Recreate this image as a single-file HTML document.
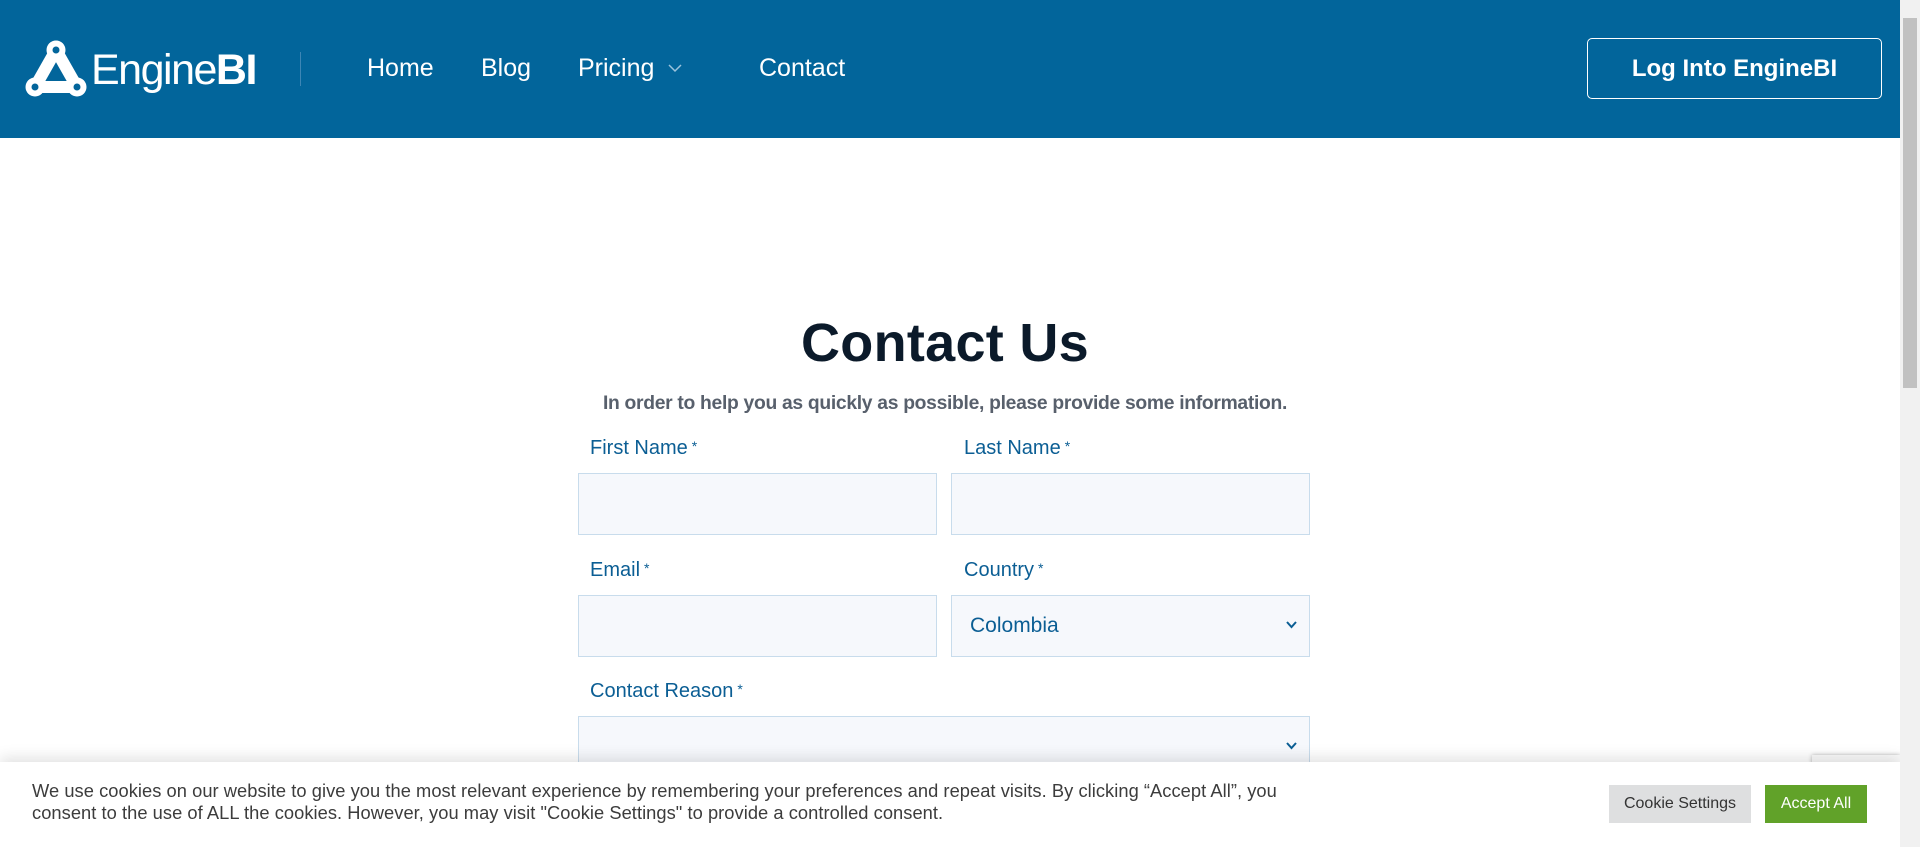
<!DOCTYPE html>
<html><head><meta charset="utf-8"><style>
*{box-sizing:border-box;margin:0;padding:0}
body{width:1920px;height:847px;overflow:hidden;background:#fff;font-family:"Liberation Sans",sans-serif;position:relative}
.hdr{position:absolute;left:0;top:0;width:1900px;height:138px;background:#02659b}
.nav a{position:absolute;top:52px;color:#fff;font-size:25px;text-decoration:none;line-height:32px}
.btn{position:absolute;left:1587px;top:38px;width:295px;height:61px;border:1.5px solid #fff;border-radius:5px;color:#fff;font-weight:bold;font-size:24px;display:flex;align-items:center;justify-content:center}
.sb{position:absolute;right:0;top:0;width:20px;height:847px;background:#f1f1f1}
.th{position:absolute;right:3px;top:18px;width:14px;height:370px;background:#c1c1c1}
h1{position:absolute;left:0;width:1890px;top:312px;text-align:center;font-size:54px;font-weight:bold;color:#0b1a2a;letter-spacing:0.3px}
.sub{position:absolute;left:0;width:1890px;top:393px;text-align:center;font-size:19.3px;font-weight:bold;color:#58606c;letter-spacing:-0.3px}
.lb{position:absolute;font-size:20px;color:#0b5e94}
.lb span{font-size:14px;vertical-align:3px;margin-left:4px}
.in{position:absolute;background:#f6f8fc;border:1.5px solid #c8dcec}
.chev{position:absolute;right:12px;top:50%;margin-top:-5px}
.ck{position:absolute;left:0;top:762px;width:1900px;height:85px;background:#fff;box-shadow:0 -4px 14px rgba(0,0,0,.12)}
.ckt{position:absolute;left:32px;top:18px;font-size:18.3px;line-height:22px;color:#3c3c3c;width:1245px;letter-spacing:0.05px}
.b1{position:absolute;left:1609px;top:23px;width:142px;height:38px;background:#dedfe0;color:#333;font-size:16px;display:flex;align-items:center;justify-content:center}
.b2{position:absolute;left:1765px;top:23px;width:102px;height:38px;background:#61a229;color:#fff;font-size:16px;display:flex;align-items:center;justify-content:center}
</style></head><body>
<div class="hdr">
<svg style="position:absolute;left:25px;top:40px" width="62" height="58" viewBox="0 0 62 58"><g stroke="#fff" stroke-width="12" stroke-linecap="round"><line x1="31" y1="10" x2="10" y2="47"/><line x1="31" y1="10" x2="52" y2="47"/><line x1="10" y1="47" x2="52" y2="47"/></g><g fill="#fff"><circle cx="31" cy="10" r="9.5"/><circle cx="10" cy="47" r="9.5"/><circle cx="52" cy="47" r="9.5"/></g><g fill="#02659b"><circle cx="31" cy="10" r="3.5"/><circle cx="10" cy="47" r="3.5"/><circle cx="52" cy="47" r="3.5"/><path d="M31 28 L39 40 L23 40 Z"/></g></svg>
<div style="position:absolute;left:91px;top:46px;color:#fff;font-size:43px;line-height:48px;letter-spacing:-1.5px"><span style="font-weight:normal">Engine</span><b>BI</b></div>
<div style="position:absolute;left:300px;top:52px;width:1px;height:34px;background:#3d86b5"></div>
<div class="nav"><a style="left:367px">Home</a><a style="left:481px">Blog</a><a style="left:578px">Pricing</a><a style="left:759px">Contact</a></div>
<svg style="position:absolute;left:668px;top:64px" width="14" height="9" viewBox="0 0 14 9"><path d="M1 1 L7 7 L13 1" stroke="#9cc3dc" stroke-width="1.5" fill="none"/></svg>
<div class="btn">Log Into EngineBI</div>
</div>
<h1>Contact Us</h1>
<div class="sub">In order to help you as quickly as possible, please provide some information.</div>
<div class="lb" style="left:590px;top:437px">First Name<span>*</span></div>
<div class="lb" style="left:964px;top:437px">Last Name<span>*</span></div>
<div class="in" style="left:578px;top:473px;width:359px;height:62px"></div>
<div class="in" style="left:951px;top:473px;width:359px;height:62px"></div>
<div class="lb" style="left:590px;top:559px">Email<span>*</span></div>
<div class="lb" style="left:964px;top:559px">Country<span>*</span></div>
<div class="in" style="left:578px;top:595px;width:359px;height:62px"></div>
<div class="in" style="left:951px;top:595px;width:359px;height:62px"><div style="position:absolute;left:18px;top:18px;font-size:21px;color:#0b5e94">Colombia</div><svg class="chev" width="11" height="8" viewBox="0 0 11 8"><path d="M1 1 L5.5 6 L10 1" stroke="#0b5e94" stroke-width="2" fill="none"/></svg></div>
<div class="lb" style="left:590px;top:680px">Contact Reason<span>*</span></div>
<div class="in" style="left:578px;top:716px;width:732px;height:62px"><svg class="chev" width="11" height="8" viewBox="0 0 11 8"><path d="M1 1 L5.5 6 L10 1" stroke="#0b5e94" stroke-width="2" fill="none"/></svg></div>
<div style="position:absolute;left:1812px;top:755px;width:88px;height:20px;background:#f9f9f9;box-shadow:0 0 4px rgba(0,0,0,.3)"></div>
<div class="ck">
<div class="ckt">We use cookies on our website to give you the most relevant experience by remembering your preferences and repeat visits. By clicking “Accept All”, you consent to the use of ALL the cookies. However, you may visit "Cookie Settings" to provide a controlled consent.</div>
<div class="b1">Cookie Settings</div><div class="b2">Accept All</div>
</div>
<div class="sb"><div class="th"></div></div>
</body></html>
